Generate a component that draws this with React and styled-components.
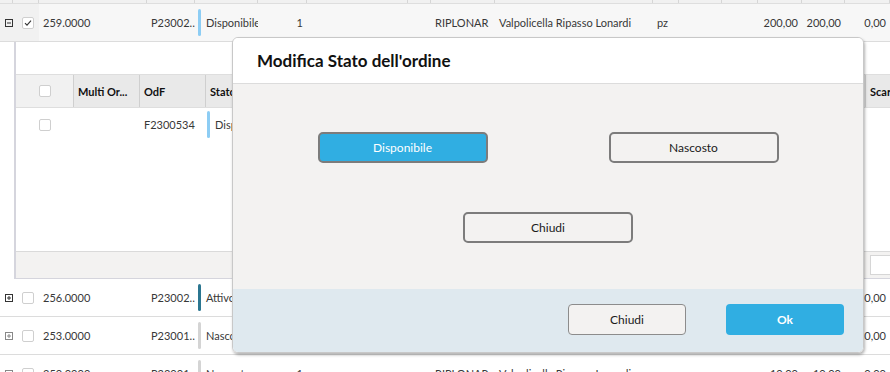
import React from "react"
import styled, { createGlobalStyle } from "styled-components"

const GlobalStyle = createGlobalStyle`
  html, body {
    margin: 0;
    padding: 0;
    background: #fff;
  }
  body {
    font-family: Lato, "Open Sans", sans-serif;
    font-size: 11px;
    color: #383838;
    overflow: hidden;
  }
`

const COLS =
  "13px 26px 108px 48px 63px 49px 101px 23px 64px 158px 26px 43px 36px 44px 43px 45px"
const DETAIL_COLS = "58px 66px 66px 660px 80px"

const Page = styled.div`
  position: relative;
  width: 890px;
  height: 372px;
  overflow: hidden;
  display: flex;
  flex-direction: column;
`

const HeadStrip = styled.div`
  display: grid;
  grid-template-columns: ${COLS};
  height: 3px;
  flex: none;
  background: #f1f1f1;
  border-bottom: 1px solid #dedede;
`

const HeadCell = styled.div`
  border-right: 1px solid #d6d6d6;
`

const Row = styled.div`
  display: grid;
  grid-template-columns: ${COLS};
  height: 37px;
  flex: none;
  align-items: center;
  background: ${({ selected }) => (selected ? "#f7f7f7" : "#fff")};
  border-bottom: 1px solid #dcdcdc;
`

const Cell = styled.div`
  height: 100%;
  display: flex;
  align-items: center;
  justify-content: ${({ right }) => (right ? "flex-end" : "flex-start")};
  padding: ${({ right }) => (right ? "0 4px 0 0" : "0 0 0 4px")};
  white-space: nowrap;
  overflow: hidden;
  background: ${({ shade }) => (shade ? "#f1f1f1" : "transparent")};
`

const IconCell = styled(Cell)`
  padding: 0 0 0 5px;
`

const CheckCell = styled(Cell)`
  padding: 0 0 0 9px;
`

const StatusCell = styled(Cell)`
  padding-left: 3px;
  gap: 5px;
`

const StatusBar = styled.span`
  flex: none;
  width: 3px;
  height: 27px;
  border-radius: 2px;
  background: ${({ color }) => color};
`

const Box = styled.span`
  flex: none;
  box-sizing: border-box;
  width: 12px;
  height: 12px;
  border: 1px solid #cfcfcf;
  border-radius: 2px;
  background: #fff;
  display: flex;
  align-items: center;
  justify-content: center;
`

const Detail = styled.div`
  flex: none;
  height: 236px;
  margin-left: 14px;
  border-left: 2px solid #d5d5dd;
  border-bottom: 1px solid #d5d5dd;
  display: flex;
  flex-direction: column;
  overflow: hidden;
`

const GroupArea = styled.div`
  height: 32px;
  flex: none;
  border-bottom: 1px solid #dedede;
`

const DetailHead = styled.div`
  display: grid;
  grid-template-columns: ${DETAIL_COLS};
  height: 32px;
  flex: none;
  background: #e9e9e9;
  border-bottom: 1px solid #dedede;
`

const DetailHeadCell = styled.div`
  display: flex;
  align-items: center;
  justify-content: ${({ center }) => (center ? "center" : "flex-start")};
  padding-left: ${({ center }) => (center ? "0" : "4px")};
  font-weight: 700;
  color: #111;
  white-space: nowrap;
  overflow: hidden;
  border-right: ${({ line }) => (line ? "1px solid #cfcfcf" : "none")};
  background: ${({ light }) => (light ? "#f1f1f1" : "transparent")};
`

const DetailRow = styled.div`
  display: grid;
  grid-template-columns: ${DETAIL_COLS};
  height: 33px;
  flex: none;
  align-items: center;
`

const DetailCell = styled.div`
  display: flex;
  align-items: center;
  justify-content: ${({ center }) => (center ? "center" : "flex-start")};
  padding-left: ${({ center, pad = 4 }) => (center ? "0" : `${pad}px`)};
  gap: 5px;
  height: 100%;
  white-space: nowrap;
  overflow: hidden;
`

const DetailFill = styled.div`
  flex: 1;
`

const DetailFooter = styled.div`
  display: grid;
  grid-template-columns: ${DETAIL_COLS};
  height: 26px;
  flex: none;
  background: #f3f2f1;
  border-top: 1px solid #dadada;
  align-items: center;
`

const FilterInput = styled.div`
  box-sizing: border-box;
  height: 20px;
  margin-left: 4px;
  background: #fff;
  border: 1px solid #d6d6d6;
`

const Modal = styled.div`
  position: absolute;
  top: 37px;
  left: 232px;
  width: 632px;
  height: 316px;
  box-sizing: border-box;
  border: 1px solid #c8c8c8;
  border-radius: 6px;
  box-shadow: 1px 2px 3px rgba(0, 0, 0, 0.3);
  overflow: hidden;
  display: flex;
  flex-direction: column;
`

const ModalHeader = styled.div`
  height: 45px;
  flex: none;
  background: #fff;
  border-bottom: 1px solid #dcdcdc;
  display: flex;
  align-items: center;
  padding-left: 24px;
  font-size: 17px;
  font-weight: 700;
  color: #111;
`

const ModalBody = styled.div`
  flex: 1;
  background: #f3f2f1;
  display: grid;
  grid-template-columns: 1fr 1fr;
  align-content: start;
  justify-items: center;
  row-gap: 49px;
  padding: 48px 24px 0;
`

const StateButton = styled.button`
  box-sizing: border-box;
  width: 170px;
  height: 31px;
  border: 2px solid #7c7c7c;
  border-radius: 5px;
  background: ${({ active }) => (active ? "#30aee2" : "#f3f2f1")};
  color: ${({ active }) => (active ? "#fff" : "#1a1a1a")};
  font-family: inherit;
  font-size: 12px;
  grid-column: ${({ wide }) => (wide ? "1 / -1" : "auto")};
`

const ModalFooter = styled.div`
  height: 63px;
  flex: none;
  background: #dfe9ef;
  display: flex;
  justify-content: flex-end;
  align-items: flex-start;
  gap: 40px;
  padding: 15px 19px 0 0;
  box-sizing: border-box;
`

const FooterButton = styled.button`
  box-sizing: border-box;
  width: 118px;
  height: 31px;
  border-radius: 4px;
  border: ${({ primary }) => (primary ? "none" : "1px solid #8c8c8c")};
  background: ${({ primary }) => (primary ? "#30aee2" : "#f3f2f1")};
  color: ${({ primary }) => (primary ? "#fff" : "#1a1a1a")};
  font-family: inherit;
  font-size: 12px;
  font-weight: ${({ primary }) => (primary ? 700 : 400)};
`

function Expander({ open, color = "#333" }) {
  return (
    <svg width="8" height="8" viewBox="0 0 8 8">
      <rect x="0.5" y="0.5" width="7" height="7" fill="none" stroke={color} />
      <line x1="2" y1="4" x2="6" y2="4" stroke={color} />
      {!open && <line x1="4" y1="2" x2="4" y2="6" stroke={color} />}
    </svg>
  )
}

function Check({ checked }) {
  return (
    <Box>
      {checked && (
        <svg width="8" height="8" viewBox="0 0 8 8">
          <path d="M1 4.2 L3 6.2 L7 1.6" fill="none" stroke="#333" strokeWidth="1.1" />
        </svg>
      )}
    </Box>
  )
}

const rows = [
  { qty: "256.0000", code: "P23002…", state: "Attivo", bar: "#2b7690", icon: "#333", tail: ["", "", "", "0,00"] },
  { qty: "253.0000", code: "P23001…", state: "Nascosto", bar: "#d4d4d4", icon: "#888", tail: ["", "", "", "0,00"] },
  { qty: "250.0000", code: "P23001…", state: "Nascosto", bar: "#d4d4d4", icon: "#888", tail: ["", "10,00", "10,00", "0,00"] },
]

function OrderRow({ qty, code, state, bar, icon, tail, selected, open }) {
  return (
    <Row selected={selected}>
      <IconCell shade={selected}>
        <Expander open={open} color={icon} />
      </IconCell>
      <CheckCell shade={selected}>
        <Check checked={selected} />
      </CheckCell>
      <Cell>{qty}</Cell>
      <Cell>{code}</Cell>
      <StatusCell>
        <StatusBar color={bar} />
        {state}
      </StatusCell>
      <Cell right>1</Cell>
      <Cell />
      <Cell />
      <Cell>RIPLONAR</Cell>
      <Cell>Valpolicella Ripasso Lonardi</Cell>
      <Cell>pz</Cell>
      <Cell />
      <Cell>{tail[0]}</Cell>
      <Cell right>{tail[1]}</Cell>
      <Cell right>{tail[2]}</Cell>
      <Cell right>{tail[3]}</Cell>
    </Row>
  )
}

export default function App() {
  return (
    <>
      <GlobalStyle />
      <Page>
        <HeadStrip>
          {COLS.split(" ").map((_, i) => (
            <HeadCell key={i} />
          ))}
        </HeadStrip>
        <OrderRow
          selected
          open
          qty="259.0000"
          code="P23002…"
          state="Disponibile"
          bar="#8dcdf4"
          icon="#333"
          tail={["", "200,00", "200,00", "0,00"]}
        />
        <Detail>
          <GroupArea />
          <DetailHead>
            <DetailHeadCell center light line>
              <Check />
            </DetailHeadCell>
            <DetailHeadCell line>Multi Or...</DetailHeadCell>
            <DetailHeadCell line>OdF</DetailHeadCell>
            <DetailHeadCell line>Stato</DetailHeadCell>
            <DetailHeadCell>Scarto</DetailHeadCell>
          </DetailHead>
          <DetailRow>
            <DetailCell center>
              <Check />
            </DetailCell>
            <DetailCell />
            <DetailCell>F2300534</DetailCell>
            <DetailCell pad={1}>
              <StatusBar color="#8dcdf4" />
              Disponibile
            </DetailCell>
            <DetailCell />
          </DetailRow>
          <DetailFill />
          <DetailFooter>
            <span />
            <span />
            <span />
            <span />
            <FilterInput />
          </DetailFooter>
        </Detail>
        {rows.map((r) => (
          <OrderRow key={r.qty} {...r} />
        ))}
        <Modal>
          <ModalHeader>Modifica Stato dell'ordine</ModalHeader>
          <ModalBody>
            <StateButton active>Disponibile</StateButton>
            <StateButton>Nascosto</StateButton>
            <StateButton wide>Chiudi</StateButton>
          </ModalBody>
          <ModalFooter>
            <FooterButton>Chiudi</FooterButton>
            <FooterButton primary>Ok</FooterButton>
          </ModalFooter>
        </Modal>
      </Page>
    </>
  )
}
